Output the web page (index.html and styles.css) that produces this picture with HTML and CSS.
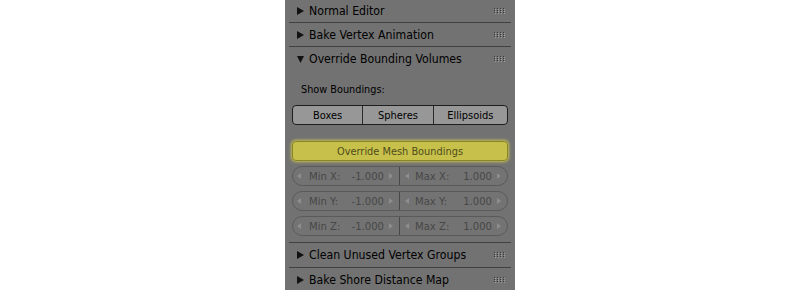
FILE: index.html
```html
<!DOCTYPE html>
<html>
<head>
<meta charset="utf-8">
<link rel="stylesheet" href="styles.css">
</head>
<body>
<div class="panel">
  <div class="hdr h1">
    <svg class="tri" width="7" height="8" viewBox="0 0 7 8"><polygon points="0,0 7,4 0,8" /></svg>
    <span class="title">Normal Editor</span>
    <svg class="grip" width="11" height="6" viewBox="0 0 11 6"><g fill="#3a3a3a"><rect x="0" y="0" width="1" height="1"/><rect x="3" y="0" width="1" height="1"/><rect x="6" y="0" width="1" height="1"/><rect x="9" y="0" width="1" height="1"/><rect x="0" y="2" width="1" height="1"/><rect x="3" y="2" width="1" height="1"/><rect x="6" y="2" width="1" height="1"/><rect x="9" y="2" width="1" height="1"/><rect x="0" y="4" width="1" height="1"/><rect x="3" y="4" width="1" height="1"/><rect x="6" y="4" width="1" height="1"/><rect x="9" y="4" width="1" height="1"/></g><g fill="#a0a0a0"><rect x="1" y="1" width="1" height="1"/><rect x="4" y="1" width="1" height="1"/><rect x="7" y="1" width="1" height="1"/><rect x="10" y="1" width="1" height="1"/><rect x="1" y="3" width="1" height="1"/><rect x="4" y="3" width="1" height="1"/><rect x="7" y="3" width="1" height="1"/><rect x="10" y="3" width="1" height="1"/><rect x="1" y="5" width="1" height="1"/><rect x="4" y="5" width="1" height="1"/><rect x="7" y="5" width="1" height="1"/><rect x="10" y="5" width="1" height="1"/></g></svg>
  </div>
  <div class="sep"></div>
  <div class="hdr h2">
    <svg class="tri" width="7" height="8" viewBox="0 0 7 8"><polygon points="0,0 7,4 0,8" /></svg>
    <span class="title">Bake Vertex Animation</span>
    <svg class="grip" width="11" height="6" viewBox="0 0 11 6"><g fill="#3a3a3a"><rect x="0" y="0" width="1" height="1"/><rect x="3" y="0" width="1" height="1"/><rect x="6" y="0" width="1" height="1"/><rect x="9" y="0" width="1" height="1"/><rect x="0" y="2" width="1" height="1"/><rect x="3" y="2" width="1" height="1"/><rect x="6" y="2" width="1" height="1"/><rect x="9" y="2" width="1" height="1"/><rect x="0" y="4" width="1" height="1"/><rect x="3" y="4" width="1" height="1"/><rect x="6" y="4" width="1" height="1"/><rect x="9" y="4" width="1" height="1"/></g><g fill="#a0a0a0"><rect x="1" y="1" width="1" height="1"/><rect x="4" y="1" width="1" height="1"/><rect x="7" y="1" width="1" height="1"/><rect x="10" y="1" width="1" height="1"/><rect x="1" y="3" width="1" height="1"/><rect x="4" y="3" width="1" height="1"/><rect x="7" y="3" width="1" height="1"/><rect x="10" y="3" width="1" height="1"/><rect x="1" y="5" width="1" height="1"/><rect x="4" y="5" width="1" height="1"/><rect x="7" y="5" width="1" height="1"/><rect x="10" y="5" width="1" height="1"/></g></svg>
  </div>
  <div class="sep"></div>
  <div class="hdr h3">
    <svg class="tri" width="7" height="8" viewBox="0 0 7 8"><polygon points="0,1 7,1 3.5,8" /></svg>
    <span class="title">Override Bounding Volumes</span>
    <svg class="grip" width="11" height="6" viewBox="0 0 11 6"><g fill="#3a3a3a"><rect x="0" y="0" width="1" height="1"/><rect x="3" y="0" width="1" height="1"/><rect x="6" y="0" width="1" height="1"/><rect x="9" y="0" width="1" height="1"/><rect x="0" y="2" width="1" height="1"/><rect x="3" y="2" width="1" height="1"/><rect x="6" y="2" width="1" height="1"/><rect x="9" y="2" width="1" height="1"/><rect x="0" y="4" width="1" height="1"/><rect x="3" y="4" width="1" height="1"/><rect x="6" y="4" width="1" height="1"/><rect x="9" y="4" width="1" height="1"/></g><g fill="#a0a0a0"><rect x="1" y="1" width="1" height="1"/><rect x="4" y="1" width="1" height="1"/><rect x="7" y="1" width="1" height="1"/><rect x="10" y="1" width="1" height="1"/><rect x="1" y="3" width="1" height="1"/><rect x="4" y="3" width="1" height="1"/><rect x="7" y="3" width="1" height="1"/><rect x="10" y="3" width="1" height="1"/><rect x="1" y="5" width="1" height="1"/><rect x="4" y="5" width="1" height="1"/><rect x="7" y="5" width="1" height="1"/><rect x="10" y="5" width="1" height="1"/></g></svg>
  </div>
  <div class="body">
    <div class="label">Show Boundings:</div>
    <div class="seg">
      <div class="segbtn">Boxes</div>
      <div class="segbtn">Spheres</div>
      <div class="segbtn">Ellipsoids</div>
    </div>
    <div class="toggle">Override Mesh Boundings</div>
    <div class="fields">
      <div class="frow">
        <div class="field left"><svg class="arr" width="4" height="6" viewBox="0 0 4 6"><polygon points="4,0 0,3 4,6"/></svg><span class="fl">Min X:</span><span class="fv">-1.000</span><svg class="arr" width="4" height="6" viewBox="0 0 4 6"><polygon points="0,0 4,3 0,6"/></svg></div>
        <div class="field right"><svg class="arr" width="4" height="6" viewBox="0 0 4 6"><polygon points="4,0 0,3 4,6"/></svg><span class="fl">Max X:</span><span class="fv">1.000</span><svg class="arr" width="4" height="6" viewBox="0 0 4 6"><polygon points="0,0 4,3 0,6"/></svg></div>
      </div>
      <div class="frow">
        <div class="field left"><svg class="arr" width="4" height="6" viewBox="0 0 4 6"><polygon points="4,0 0,3 4,6"/></svg><span class="fl">Min Y:</span><span class="fv">-1.000</span><svg class="arr" width="4" height="6" viewBox="0 0 4 6"><polygon points="0,0 4,3 0,6"/></svg></div>
        <div class="field right"><svg class="arr" width="4" height="6" viewBox="0 0 4 6"><polygon points="4,0 0,3 4,6"/></svg><span class="fl">Max Y:</span><span class="fv">1.000</span><svg class="arr" width="4" height="6" viewBox="0 0 4 6"><polygon points="0,0 4,3 0,6"/></svg></div>
      </div>
      <div class="frow">
        <div class="field left"><svg class="arr" width="4" height="6" viewBox="0 0 4 6"><polygon points="4,0 0,3 4,6"/></svg><span class="fl">Min Z:</span><span class="fv">-1.000</span><svg class="arr" width="4" height="6" viewBox="0 0 4 6"><polygon points="0,0 4,3 0,6"/></svg></div>
        <div class="field right"><svg class="arr" width="4" height="6" viewBox="0 0 4 6"><polygon points="4,0 0,3 4,6"/></svg><span class="fl">Max Z:</span><span class="fv">1.000</span><svg class="arr" width="4" height="6" viewBox="0 0 4 6"><polygon points="0,0 4,3 0,6"/></svg></div>
      </div>
    </div>
  </div>
  <div class="sep"></div>
  <div class="hdr h4">
    <svg class="tri" width="7" height="8" viewBox="0 0 7 8"><polygon points="0,0 7,4 0,8" /></svg>
    <span class="title">Clean Unused Vertex Groups</span>
    <svg class="grip" width="11" height="6" viewBox="0 0 11 6"><g fill="#3a3a3a"><rect x="0" y="0" width="1" height="1"/><rect x="3" y="0" width="1" height="1"/><rect x="6" y="0" width="1" height="1"/><rect x="9" y="0" width="1" height="1"/><rect x="0" y="2" width="1" height="1"/><rect x="3" y="2" width="1" height="1"/><rect x="6" y="2" width="1" height="1"/><rect x="9" y="2" width="1" height="1"/><rect x="0" y="4" width="1" height="1"/><rect x="3" y="4" width="1" height="1"/><rect x="6" y="4" width="1" height="1"/><rect x="9" y="4" width="1" height="1"/></g><g fill="#a0a0a0"><rect x="1" y="1" width="1" height="1"/><rect x="4" y="1" width="1" height="1"/><rect x="7" y="1" width="1" height="1"/><rect x="10" y="1" width="1" height="1"/><rect x="1" y="3" width="1" height="1"/><rect x="4" y="3" width="1" height="1"/><rect x="7" y="3" width="1" height="1"/><rect x="10" y="3" width="1" height="1"/><rect x="1" y="5" width="1" height="1"/><rect x="4" y="5" width="1" height="1"/><rect x="7" y="5" width="1" height="1"/><rect x="10" y="5" width="1" height="1"/></g></svg>
  </div>
  <div class="sep"></div>
  <div class="hdr h5">
    <svg class="tri" width="7" height="8" viewBox="0 0 7 8"><polygon points="0,0 7,4 0,8" /></svg>
    <span class="title">Bake Shore Distance Map</span>
    <svg class="grip" width="11" height="6" viewBox="0 0 11 6"><g fill="#3a3a3a"><rect x="0" y="0" width="1" height="1"/><rect x="3" y="0" width="1" height="1"/><rect x="6" y="0" width="1" height="1"/><rect x="9" y="0" width="1" height="1"/><rect x="0" y="2" width="1" height="1"/><rect x="3" y="2" width="1" height="1"/><rect x="6" y="2" width="1" height="1"/><rect x="9" y="2" width="1" height="1"/><rect x="0" y="4" width="1" height="1"/><rect x="3" y="4" width="1" height="1"/><rect x="6" y="4" width="1" height="1"/><rect x="9" y="4" width="1" height="1"/></g><g fill="#a0a0a0"><rect x="1" y="1" width="1" height="1"/><rect x="4" y="1" width="1" height="1"/><rect x="7" y="1" width="1" height="1"/><rect x="10" y="1" width="1" height="1"/><rect x="1" y="3" width="1" height="1"/><rect x="4" y="3" width="1" height="1"/><rect x="7" y="3" width="1" height="1"/><rect x="10" y="3" width="1" height="1"/><rect x="1" y="5" width="1" height="1"/><rect x="4" y="5" width="1" height="1"/><rect x="7" y="5" width="1" height="1"/><rect x="10" y="5" width="1" height="1"/></g></svg>
  </div>
</div>
</body>
</html>
```
FILE: styles.css
```css
html, body {
  margin: 0;
  padding: 0;
  background: #ffffff;
  height: 290px;
  overflow: hidden;
}
body {
  font-family: "DejaVu Sans Condensed", "DejaVu Sans", sans-serif;
}
.panel {
  margin-left: 285px;
  width: 230px;
  height: 290px;
  background: #727272;
  display: flex;
  flex-direction: column;
  box-sizing: border-box;
}
.hdr {
  display: flex;
  align-items: center;
  padding: 0 10px 0 12px;
  font-size: 12.2px;
  color: #000;
  flex-shrink: 0;
}
.h1 { height: 22px; }
.h2 { height: 23px; }
.h3 { height: 24px; }
.h4 { height: 24px; }
.h5 { height: 24px; }
.tri {
  fill: #111;
  margin-right: 5px;
  flex-shrink: 0;
}
.title {
  flex: 1;
  white-space: nowrap;
}
.grip { flex-shrink: 0; }
.sep {
  height: 1px;
  margin: 0 4px;
  background: #404040;
  flex-shrink: 0;
}
.body {
  padding: 10px 7px 0 7px;
  display: flex;
  flex-direction: column;
  height: 171px;
  box-sizing: border-box;
  flex-shrink: 0;
}
.label {
  font-size: 10.8px;
  height: 18px;
  line-height: 18px;
  padding-left: 9px;
  color: #000;
}
.seg {
  margin-top: 6px;
  display: flex;
  height: 20px;
  border: 1px solid #1e1e1e;
  border-radius: 4px;
  background: #979797;
  box-sizing: border-box;
  overflow: hidden;
}
.segbtn {
  flex: 1;
  font-size: 11px;
  display: flex;
  align-items: center;
  justify-content: center;
  color: #000;
}
.segbtn + .segbtn { border-left: 1px solid #2a2a2a; }
.segbtn:last-child { flex: 1.06; }
.toggle {
  margin-top: 16px;
  height: 20px;
  box-sizing: border-box;
  border: 1px solid #8a852a;
  border-radius: 4px;
  background: #c7c14b;
  box-shadow: 0 0 3px 1px rgba(225, 220, 70, 0.75);
  font-size: 10.9px;
  color: #4f4b1a;
  display: flex;
  align-items: center;
  justify-content: center;
}
.fields {
  margin-top: 5px;
  display: flex;
  flex-direction: column;
  gap: 5px;
}
.frow {
  display: flex;
  height: 20px;
  box-sizing: border-box;
  border: 1px solid #5a5a5a;
  border-radius: 10px;
  background: #737373;
  overflow: hidden;
}
.field {
  flex: 1;
  display: flex;
  align-items: center;
  font-size: 11.2px;
  color: #474747;
  padding: 0 6px 0 4px;
}
.field.right { padding-left: 5px; }
.field.left { border-right: 1px solid #484848; }
.arr {
  fill: #8e8e8e;
  flex-shrink: 0;
}
.fl { margin-left: 8px; }
.field.right .fl { margin-left: 6px; }
.fv { flex: 1; text-align: right; margin-right: 5px; }
```
